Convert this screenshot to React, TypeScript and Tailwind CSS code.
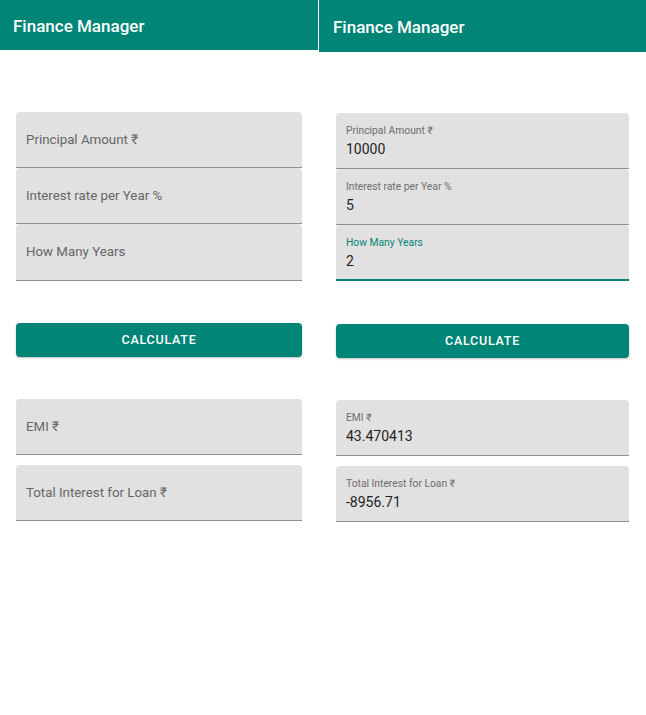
import React from 'react'

const TEAL = 'bg-[#018577]'

function Header({ tall }: { tall?: boolean }) {
  return (
    <header
      className={`${TEAL} flex items-center text-white font-medium text-[17px] ${
        tall ? 'h-[52px] pl-[14px] pt-[3px]' : 'h-[50px] pl-[13px] pt-[3px]'
      }`}
    >
      Finance Manager
    </header>
  )
}

// empty filled text field, label sits as placeholder
function EmptyField({ label, h = 'h-[56px]' }: { label: string; h?: string }) {
  return (
    <div
      className={`${h} flex items-center rounded-t-[4px] border-b border-[#8f8f8f] bg-[#e1e1e1] pl-[10px] text-[13.3px] text-[#666666]`}
    >
      {label}
    </div>
  )
}

// filled text field with floating label and value
function FilledField({
  label,
  value,
  focused,
}: {
  label: string
  value: string
  focused?: boolean
}) {
  return (
    <div
      className={`flex h-[56px] flex-col rounded-t-[4px] bg-[#e1e1e1] pl-[10px] pt-[11px] ${
        focused ? 'border-b-2 border-[#018577]' : 'border-b border-[#8f8f8f]'
      }`}
    >
      <span className={`text-[10.3px] leading-[13px] ${focused ? 'text-[#018577]' : 'text-[#6e6e6e]'}`}>
        {label}
      </span>
      <span className="mt-[3px] text-[14px] leading-[18px] text-[#1f1f1f]">{value}</span>
    </div>
  )
}

function CalcButton() {
  return (
    <button
      className={`${TEAL} flex h-[34px] w-full items-center justify-center rounded-[4px] text-[12.5px] font-medium tracking-[0.06em] text-white shadow-[0_1px_2px_rgba(0,0,0,0.25)]`}
    >
      CALCULATE
    </button>
  )
}

export default function App() {
  return (
    <div
      className="grid h-[715px] w-[646px] grid-cols-[318px_1px_327px] bg-white"
      style={{ fontFamily: 'Roboto, "DejaVu Sans", sans-serif' }}
    >
      {/* Empty form */}
      <div>
        <Header />
        <div className="px-4 pt-[62px]">
          <div className="flex flex-col">
            <EmptyField label="Principal Amount ₹" />
            <EmptyField label="Interest rate per Year %" />
            <EmptyField label="How Many Years" h="h-[57px]" />
          </div>
          <div className="mt-[42px]">
            <CalcButton />
          </div>
          <div className="mt-[42px] flex flex-col gap-[10px]">
            <EmptyField label="EMI ₹" />
            <EmptyField label="Total Interest for Loan ₹" />
          </div>
        </div>
      </div>

      <div className="bg-white" />

      {/* Filled form */}
      <div>
        <Header tall />
        <div className="px-[17px] pt-[61px]">
          <div className="flex flex-col">
            <FilledField label="Principal Amount ₹" value="10000" />
            <FilledField label="Interest rate per Year %" value="5" />
            <FilledField label="How Many Years" value="2" focused />
          </div>
          <div className="mt-[43px]">
            <CalcButton />
          </div>
          <div className="mt-[42px] flex flex-col gap-[10px]">
            <FilledField label="EMI ₹" value="43.470413" />
            <FilledField label="Total Interest for Loan ₹" value="-8956.71" />
          </div>
        </div>
      </div>
    </div>
  )
}
